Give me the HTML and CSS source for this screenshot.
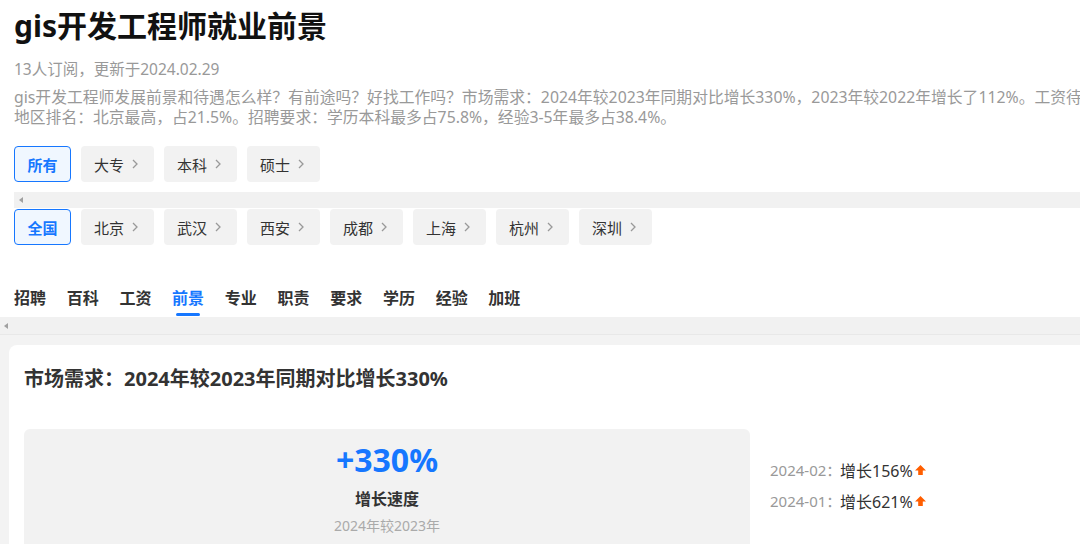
FILE: index.html
```html
<!DOCTYPE html>
<html lang="zh-CN">
<head>
  <meta charset="UTF-8" />
  <meta name="viewport" content="width=device-width, initial-scale=1.0" />
  <title>gis开发工程师就业前景</title>
  <link rel="stylesheet" href="styles.css">
</head>
<body>
  <div class="page">
    <h1>gis开发工程师就业前景</h1>
    <p class="meta">13人订阅，更新于2024.02.29</p>
    <p class="desc">
      <span>gis开发工程师发展前景和待遇怎么样？有前途吗？好找工作吗？市场需求：2024年较2023年同期对比增长330%，2023年较2022年增长了112%。工资待遇：平均月薪以本科学历为主。</span>
      <span>地区排名：北京最高，占21.5%。招聘要求：学历本科最多占75.8%，经验3-5年最多占38.4%。</span>
    </p>

    <div class="chips">
      <a class="chip active">所有</a>
      <a class="chip">大专<svg class="chev" viewBox="0 0 6 10"><polyline points="1,1 5,5 1,9" /></svg></a>
      <a class="chip">本科<svg class="chev" viewBox="0 0 6 10"><polyline points="1,1 5,5 1,9" /></svg></a>
      <a class="chip">硕士<svg class="chev" viewBox="0 0 6 10"><polyline points="1,1 5,5 1,9" /></svg></a>
    </div>
    <div class="scrollbar"><span class="arrow"></span></div>
    <div class="chips tight">
      <a class="chip active">全国</a>
      <a class="chip">北京<svg class="chev" viewBox="0 0 6 10"><polyline points="1,1 5,5 1,9" /></svg></a>
      <a class="chip">武汉<svg class="chev" viewBox="0 0 6 10"><polyline points="1,1 5,5 1,9" /></svg></a>
      <a class="chip">西安<svg class="chev" viewBox="0 0 6 10"><polyline points="1,1 5,5 1,9" /></svg></a>
      <a class="chip">成都<svg class="chev" viewBox="0 0 6 10"><polyline points="1,1 5,5 1,9" /></svg></a>
      <a class="chip">上海<svg class="chev" viewBox="0 0 6 10"><polyline points="1,1 5,5 1,9" /></svg></a>
      <a class="chip">杭州<svg class="chev" viewBox="0 0 6 10"><polyline points="1,1 5,5 1,9" /></svg></a>
      <a class="chip">深圳<svg class="chev" viewBox="0 0 6 10"><polyline points="1,1 5,5 1,9" /></svg></a>
    </div>

    <nav class="tabs">
      <a class="tab">招聘</a>
      <a class="tab">百科</a>
      <a class="tab">工资</a>
      <a class="tab active">前景</a>
      <a class="tab">专业</a>
      <a class="tab">职责</a>
      <a class="tab">要求</a>
      <a class="tab">学历</a>
      <a class="tab">经验</a>
      <a class="tab">加班</a>
    </nav>
  </div>
  <div class="scrollbar full"><span class="arrow"></span></div>

  <main class="content">
    <section class="card">
      <h2>市场需求：2024年较2023年同期对比增长330%</h2>
      <div class="stat-row">
        <div class="stat-box">
          <div class="stat-value">+330%</div>
          <div class="stat-label">增长速度</div>
          <div class="stat-note">2024年较2023年</div>
        </div>
        <ul class="trend">
          <li><span class="month">2024-02：</span><span class="val">增长156%</span><svg class="up" viewBox="0 0 11 10"><path d="M5.5 0 L11 5.5 H7.8 V10 H3.2 V5.5 H0 Z" /></svg></li>
          <li><span class="month">2024-01：</span><span class="val">增长621%</span><svg class="up" viewBox="0 0 11 10"><path d="M5.5 0 L11 5.5 H7.8 V10 H3.2 V5.5 H0 Z" /></svg></li>
        </ul>
      </div>
    </section>
  </main>
</body>
</html>
```

FILE: styles.css
```css
html, body {
  overflow: hidden;
}
body {
  margin: 0;
  font-family: "Noto Sans", "Noto Sans CJK SC", sans-serif;
  color: #333;
  background-color: #fff;
}
.page {
  padding: 0 0 0 14px;
}
h1 {
  margin: 6px 0 0;
  font-size: 30px;
  line-height: 40px;
  font-weight: bold;
  color: #111;
}
.meta {
  margin: 13px 0 0;
  font-size: 15.5px;
  line-height: 20px;
  color: #999;
}
.desc {
  margin: 9px 0 0;
  font-size: 15.8px;
  line-height: 19.5px;
  color: #999;
}
.desc span {
  display: block;
  white-space: nowrap;
}
.chips {
  display: flex;
  gap: 10px;
  margin-top: 19px;
}
.chips.tight {
  margin-top: 1px;
}
.chip {
  display: inline-flex;
  align-items: center;
  gap: 8px;
  width: 73px;
  height: 36px;
  padding: 0 0 0 13px;
  box-sizing: border-box;
  border-radius: 4px;
  background-color: #f2f2f2;
  font-size: 15px;
  color: #333;
  cursor: pointer;
}
.chip.active {
  width: 57px;
  padding: 0;
  justify-content: center;
  border: 1px solid #1677ff;
  background-color: #f0f7ff;
  color: #1677ff;
  font-weight: bold;
}
.chev {
  width: 6px;
  height: 10px;
  fill: none;
  stroke: #999;
  stroke-width: 1.3;
}
.scrollbar {
  height: 16px;
  margin-top: 10px;
  background-color: #f1f1f1;
  display: flex;
  align-items: center;
  padding-left: 5px;
}
.scrollbar.full {
  margin-top: 0;
  height: 17px;
  padding-left: 4px;
  border-bottom: 1px solid #e8e8e8;
}
.arrow {
  width: 0;
  height: 0;
  border-top: 3.5px solid transparent;
  border-bottom: 3.5px solid transparent;
  border-right: 4px solid #a0a0a0;
}
.tabs {
  display: flex;
  gap: 20.7px;
  margin-top: 41px;
}
.tab {
  position: relative;
  font-size: 16px;
  line-height: 24px;
  padding-bottom: 7px;
  font-weight: bold;
  color: #333;
  cursor: pointer;
}
.tab.active {
  color: #1677ff;
}
.tab.active::after {
  content: "";
  position: absolute;
  left: 50%;
  bottom: 1px;
  width: 24px;
  height: 3px;
  margin-left: -12px;
  border-radius: 2px;
  background-color: #1677ff;
}
.content {
  background-color: #f3f3f3;
  padding: 10px 0 0 9px;
  min-height: 300px;
}
.card {
  width: 1200px;
  background-color: #fff;
  border-radius: 8px 0 0 0;
  padding: 20px 15px 40px;
}
h2 {
  margin: 0;
  font-size: 20px;
  line-height: 28px;
  font-weight: bold;
  color: #333;
}
.stat-row {
  display: flex;
  margin-top: 36px;
}
.stat-box {
  flex-shrink: 0;
  width: 726px;
  height: 140px;
  border-radius: 6px;
  background-color: #f2f2f2;
  text-align: center;
  padding-top: 11px;
  box-sizing: border-box;
}
.stat-value {
  font-size: 32px;
  line-height: 40px;
  font-weight: bold;
  color: #1677ff;
}
.stat-label {
  margin-top: 7px;
  font-size: 16px;
  line-height: 24px;
  font-weight: bold;
  color: #333;
}
.stat-note {
  margin-top: 5px;
  font-size: 14px;
  line-height: 20px;
  color: #aaa;
}
.trend {
  list-style: none;
  margin: 0 0 0 20px;
  padding: 25px 0 0;
}
.trend li {
  display: flex;
  align-items: center;
  height: 31px;
  white-space: nowrap;
}
.month {
  flex-shrink: 0;
  width: 70px;
  font-size: 15px;
  color: #999;
}
.val {
  font-size: 16px;
  color: #333;
}
.up {
  width: 11px;
  height: 10px;
  margin-left: 2px;
  fill: #ff5e00;
}
```
